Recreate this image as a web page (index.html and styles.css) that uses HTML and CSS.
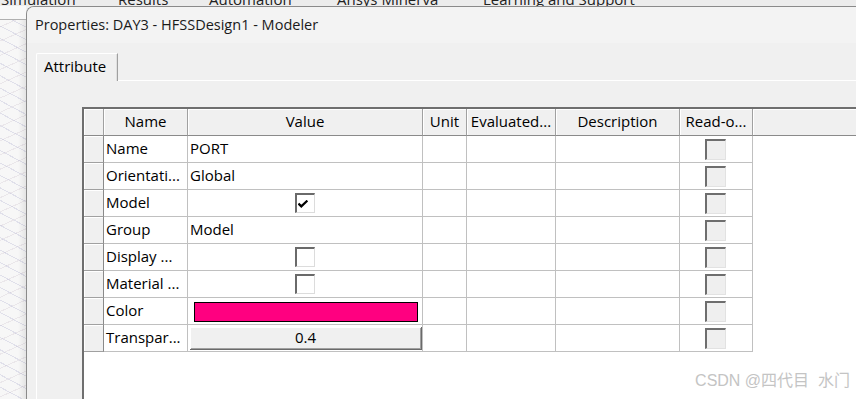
FILE: index.html
```html
<!DOCTYPE html>
<html>
<head>
<meta charset="utf-8">
<link rel="stylesheet" href="styles.css">
</head>
<body>
<div class="menu">
  <span class="mi m1">Simulation</span>
  <span class="mi m2">Results</span>
  <span class="mi m3">Automation</span>
  <span class="mi m4">Ansys Minerva</span>
  <span class="mi">Learning and Support</span>
</div>
<div class="main">
  <div class="view"><div class="view-top"></div><div class="view-mesh"></div></div>
  <div class="dialog">
    <div class="titlebar">Properties: DAY3 - HFSSDesign1 - Modeler</div>
    <div class="dlg-body">
      <div class="tabs">
        <div class="tab">Attribute</div>
        <div class="tab-rest"></div>
      </div>
      <div class="pane">
        <div class="grid">
          <div class="hd corner"></div>
          <div class="hd">Name</div>
          <div class="hd">Value</div>
          <div class="hd">Unit</div>
          <div class="hd">Evaluated...</div>
          <div class="hd">Description</div>
          <div class="hd">Read-o...</div>
          <div class="hd fill"></div>

          <div class="ind"></div><div class="c">Name</div><div class="c">PORT</div><div class="c"></div><div class="c"></div><div class="c"></div><div class="c ctr"><span class="ro"></span></div><div class="blank"></div>
          <div class="ind"></div><div class="c">Orientati...</div><div class="c">Global</div><div class="c"></div><div class="c"></div><div class="c"></div><div class="c ctr"><span class="ro"></span></div><div class="blank"></div>
          <div class="ind"></div><div class="c">Model</div><div class="c ctr"><span class="cb"><svg width="10" height="8" viewBox="0 0 10 8"><path d="M0.5 3.6 L3.3 6.4 L9.4 0.6" fill="none" stroke="#000" stroke-width="2.2"/></svg></span></div><div class="c"></div><div class="c"></div><div class="c"></div><div class="c ctr"><span class="ro"></span></div><div class="blank"></div>
          <div class="ind"></div><div class="c">Group</div><div class="c">Model</div><div class="c"></div><div class="c"></div><div class="c"></div><div class="c ctr"><span class="ro"></span></div><div class="blank"></div>
          <div class="ind"></div><div class="c">Display ...</div><div class="c ctr"><span class="cb"></span></div><div class="c"></div><div class="c"></div><div class="c"></div><div class="c ctr"><span class="ro"></span></div><div class="blank"></div>
          <div class="ind"></div><div class="c">Material ...</div><div class="c ctr"><span class="cb"></span></div><div class="c"></div><div class="c"></div><div class="c"></div><div class="c ctr"><span class="ro"></span></div><div class="blank"></div>
          <div class="ind"></div><div class="c">Color</div><div class="c colorcell"><div class="swatch"></div></div><div class="c"></div><div class="c"></div><div class="c"></div><div class="c ctr"><span class="ro"></span></div><div class="blank"></div>
          <div class="ind"></div><div class="c">Transpar...</div><div class="c btncell"><div class="btn">0.4</div></div><div class="c"></div><div class="c"></div><div class="c"></div><div class="c ctr"><span class="ro"></span></div><div class="blank"></div>
        </div>
      </div>
    </div>
  </div>
</div>
<div class="watermark">CSDN @四代目&nbsp; 水门</div>
</body>
</html>
```
FILE: styles.css
```css
html, body {
  margin: 0;
  padding: 0;
  width: 856px;
  height: 399px;
  overflow: hidden;
  background: #f0f0f0;
  font-family: "Open Sans", "Noto Sans", sans-serif;
  font-size: 14px;
  color: #000;
  position: relative;
}

.menu {
  height: 6px;
  overflow: hidden;
  background: #ececec;
  display: flex;
  white-space: nowrap;
  font-size: 15px;
  color: #222;
}
.mi {
  display: block;
  margin-top: -11px;
  line-height: 20px;
}
.m1 { width: 117px; padding-left: 1px; }
.m2 { width: 91px; }
.m3 { width: 128px; }
.m4 { width: 146px; }

.main {
  display: flex;
  height: 393px;
}

.view {
  width: 26px;
  display: flex;
  flex-direction: column;
  background: #f6f6f6;
}
.view-top {
  height: 13px;
  background: #f8f8f8;
  border-bottom: 1px solid #b0b0b0;
}
.view-mesh {
  flex: 1;
  background:
    linear-gradient(to right, rgba(0,0,0,0) 70%, rgba(0,0,0,0.08) 100%),
    repeating-linear-gradient(28deg, rgba(0,0,0,0) 0 10px, rgba(180,180,210,0.35) 10px 11px),
    repeating-linear-gradient(-24deg, rgba(0,0,0,0) 0 12px, rgba(210,200,210,0.35) 12px 13px),
    #f7f7f7;
}

.dialog {
  flex: 1;
  display: flex;
  flex-direction: column;
  background: #f0f0f0;
  border-left: 1px solid #8a8a8a;
  border-top: 1px solid #8a8a8a;
  border-top-left-radius: 8px;
  overflow: hidden;
}

.titlebar {
  height: 36px;
  line-height: 36px;
  padding-left: 8px;
  background: #f3f3f3;
  font-size: 14.5px;
  color: #1a1a1a;
  white-space: nowrap;
}

.dlg-body {
  flex: 1;
  display: flex;
  flex-direction: column;
  padding: 10px 0 0 9px;
}

.tabs {
  display: flex;
  height: 28px;
}
.tab {
  width: 82px;
  height: 28px;
  box-sizing: border-box;
  border-left: 1px solid #ffffff;
  border-top: 1px solid #ffffff;
  border-right: 1px solid #a0a0a0;
  box-shadow: inset -1px 0 0 #e0e0e0;
  border-top-left-radius: 2px;
  padding-left: 7px;
  line-height: 25px;
  font-size: 15px;
  background: #f0f0f0;
}
.tab-rest {
  flex: 1;
  border-bottom: 1px solid #ffffff;
}

.pane {
  flex: 1;
  border-left: 1px solid #ffffff;
  padding: 26px 0 0 45px;
  display: flex;
  flex-direction: column;
}

.grid {
  flex: 1;
  display: grid;
  grid-template-columns: 20px 84px 235px 44px 89px 124px 73px 1fr;
  grid-auto-rows: 27px;
  align-content: start;
  background: #ffffff;
  border-left: 2px solid #6f6f6f;
  border-top: 2px solid #6f6f6f;
  font-size: 15px;
}

.hd {
  box-sizing: border-box;
  background: #f0f0f0;
  border-right: 1px solid #a0a0a0;
  border-bottom: 1px solid #8a8a8a;
  box-shadow: inset 1px 1px 0 #ffffff;
  text-align: center;
  line-height: 24px;
  white-space: nowrap;
  overflow: hidden;
}
.hd.fill {
  border-right: none;
}

.ind {
  box-sizing: border-box;
  background: #f0f0f0;
  border-right: 1px solid #8a8a8a;
  border-bottom: 1px solid #a0a0a0;
  box-shadow: inset 1px 1px 0 #ffffff;
}

.c {
  box-sizing: border-box;
  border-right: 1px solid #c0c0c0;
  border-bottom: 1px solid #c0c0c0;
  padding-left: 2px;
  line-height: 24px;
  white-space: nowrap;
  overflow: hidden;
}
.c.ctr {
  display: flex;
  align-items: center;
  justify-content: center;
  padding-left: 0;
}
.blank {
  background: #ffffff;
}

.cb {
  width: 20px;
  height: 20px;
  box-sizing: border-box;
  background: #ffffff;
  border-top: 2px solid #6a6a6a;
  border-left: 2px solid #6a6a6a;
  border-right: 1px solid #dcdcdc;
  border-bottom: 1px solid #dcdcdc;
  display: flex;
  align-items: center;
  padding-left: 1px;
}
.cb svg { display: block; }

.ro {
  width: 21px;
  height: 21px;
  box-sizing: border-box;
  background: #efefef;
  border-top: 2px solid #6e6e6e;
  border-left: 2px solid #6e6e6e;
  border-right: 1px solid #e2e2e2;
  border-bottom: 1px solid #e2e2e2;
  margin-left: -1px;
}

.colorcell {
  padding: 4px 4px 2px 6px;
  display: flex;
}
.swatch {
  flex: 1;
  background: #ff0080;
  border: 1px solid #000000;
}

.btncell {
  padding: 2px 0 1px 2px;
  display: flex;
}
.btn {
  flex: 1;
  box-sizing: border-box;
  background: #f0f0f0;
  border-right: 1px solid #6a6a6a;
  border-bottom: 1px solid #6a6a6a;
  box-shadow: inset 1px 1px 0 #ffffff, inset -1px -1px 0 #a0a0a0;
  text-align: center;
  line-height: 21px;
}

.watermark {
  position: absolute;
  right: 6px;
  bottom: 8px;
  font-family: "Liberation Sans", "Noto Sans CJK SC", sans-serif;
  font-size: 16px;
  color: #c4c4c4;
  white-space: nowrap;
}
```
